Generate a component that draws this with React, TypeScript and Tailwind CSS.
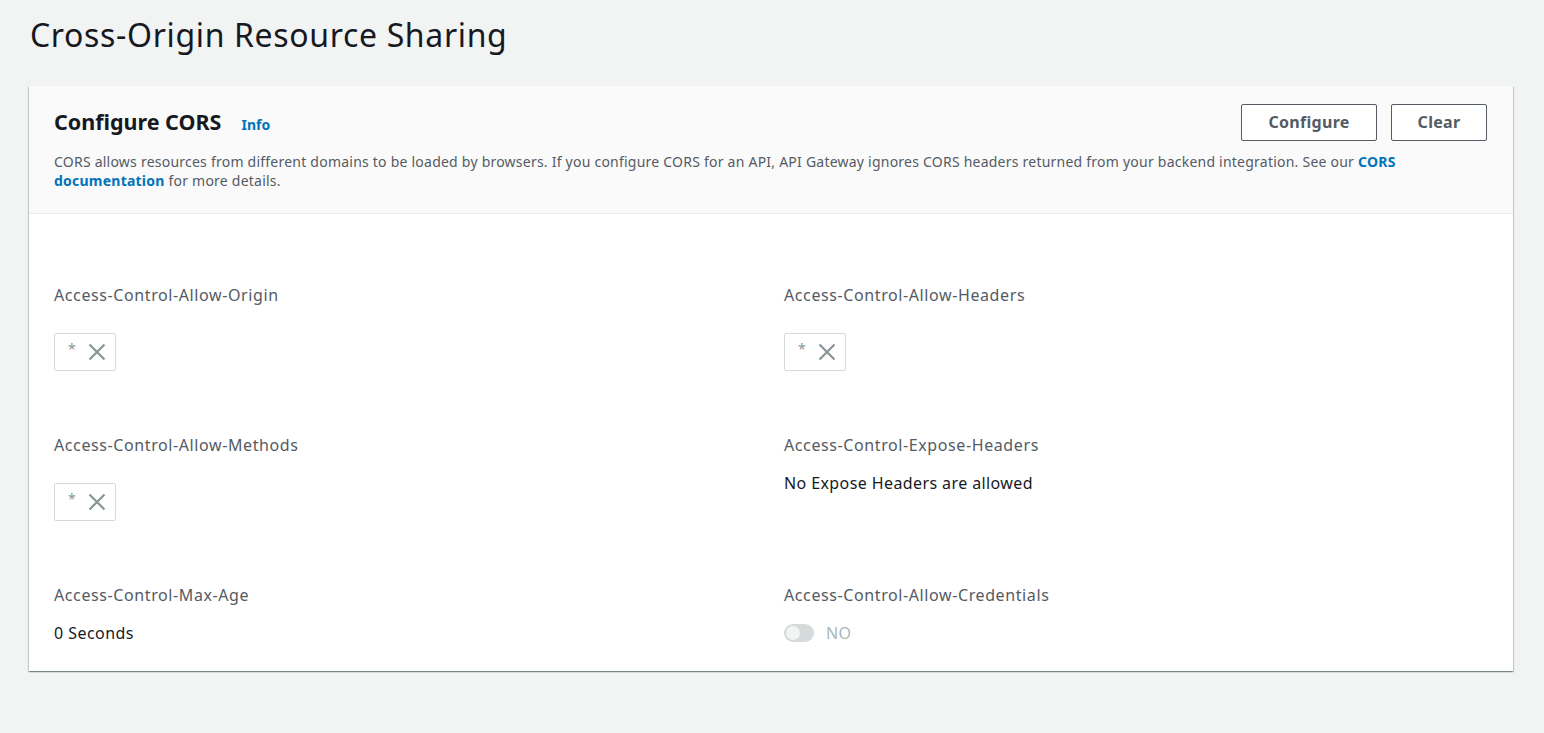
import React from "react";

const font = { fontFamily: '"Noto Sans", "Open Sans", Arial, sans-serif' };

function Token() {
  return (
    <div className="flex h-[38px] w-[62px] items-center rounded-[2px] border border-[#d5dbdb] bg-white pl-[13px]">
      <span className="mt-[-6px] text-[14px] leading-none text-[#879596]">*</span>
      <svg className="ml-[12px]" width="18" height="18" viewBox="0 0 18 18" fill="none">
        <path d="M1.5 1.5L16.5 16.5M16.5 1.5L1.5 16.5" stroke="#879596" strokeWidth="2.2" />
      </svg>
    </div>
  );
}

function Label({ children }: { children: React.ReactNode }) {
  return <div className="text-[16px] leading-[24px] tracking-[0.6px] text-[#545b64]">{children}</div>;
}

export default function App() {
  return (
    <div className="min-h-[733px] bg-[#f2f3f3]" style={font}>
      <h1 className="pl-[30px] pt-[13px] text-[32px] leading-[44px] tracking-[0.65px] text-[#16191f]">Cross-Origin Resource Sharing</h1>
      <div className="ml-[29px] mt-[29px] w-[1484px] bg-white shadow-[0_1px_1px_0_rgba(0,28,36,0.3),1px_1px_1px_0_rgba(0,28,36,0.15),-1px_1px_1px_0_rgba(0,28,36,0.15)]">
        <div className="border-b border-[#eaeded] bg-[#fafafa] px-[25px] pb-[23px] pt-[18px]">
          <div className="flex h-[36px] items-center justify-between">
            <div className="flex items-baseline">
              <h2 className="text-[21.5px] font-bold leading-[30px] text-[#16191f]">Configure CORS</h2>
              <a className="ml-[20px] text-[14px] font-bold text-[#0073bb]">Info</a>
            </div>
            <div className="mr-[1px] flex gap-[14px]">
              <button className="h-[37px] w-[136px] rounded-[2px] border border-[#545b64] bg-white text-[16px] font-bold tracking-[0.3px] text-[#545b64]">Configure</button>
              <button className="h-[37px] w-[96px] rounded-[2px] border border-[#545b64] bg-white text-[16px] font-bold tracking-[0.3px] text-[#545b64]">Clear</button>
            </div>
          </div>
          <p className="mt-[12px] pr-[80px] text-[14px] leading-[19px] tracking-[0.23px] text-[#545b64]">
            CORS allows resources from different domains to be loaded by browsers. If you configure CORS for an API, API Gateway ignores CORS headers returned from your backend integration. See our{" "}
            <a className="font-bold text-[#0073bb]">CORS</a> <a className="font-bold text-[#0073bb]">documentation</a> for more details.
          </p>
        </div>
        <div className="grid grid-cols-2 gap-x-[26px] gap-y-[62px] px-[25px] pb-[26px] pt-[69px]">
          <div>
            <Label>Access-Control-Allow-Origin</Label>
            <div className="mt-[26px]"><Token /></div>
          </div>
          <div>
            <Label>Access-Control-Allow-Headers</Label>
            <div className="mt-[26px]"><Token /></div>
          </div>
          <div>
            <Label>Access-Control-Allow-Methods</Label>
            <div className="mt-[26px]"><Token /></div>
          </div>
          <div>
            <Label>Access-Control-Expose-Headers</Label>
            <div className="mt-[14px] text-[16px] leading-[24px] tracking-[0.4px] text-[#16191f]">No Expose Headers are allowed</div>
          </div>
          <div>
            <Label>Access-Control-Max-Age</Label>
            <div className="mt-[14px] text-[16px] leading-[24px] tracking-[0.45px] text-[#16191f]">0 Seconds</div>
          </div>
          <div>
            <Label>Access-Control-Allow-Credentials</Label>
            <div className="mt-[14px] flex h-[24px] items-center">
              <div className="flex h-[18px] w-[30px] items-center rounded-full bg-[#d5dbdb] px-[2px]">
                <div className="h-[14px] w-[14px] rounded-full bg-[#f2f3f3]" />
              </div>
              <span className="ml-[12px] text-[16px] leading-[24px] tracking-[0.4px] text-[#aab7b8]">NO</span>
            </div>
          </div>
        </div>
      </div>
    </div>
  );
}
